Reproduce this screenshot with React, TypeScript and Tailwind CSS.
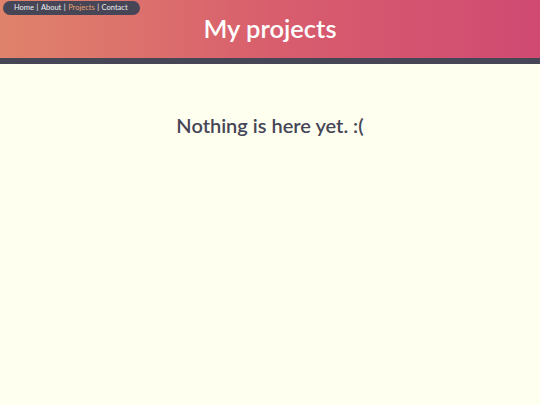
export default function App() {
  const links = ["Home", "About", "Projects", "Contact"];
  return (
    <div className="min-h-[405px] bg-[#fffff0] font-['Lato',sans-serif]">
      <header className="relative h-[58px] bg-gradient-to-r from-[#e0836b] via-[#d85e6d] to-[#d04a72] flex items-center justify-center">
        <nav className="absolute left-[3px] top-[1px] h-[14px] pl-[11px] pr-[12px] rounded-full bg-[#464657] flex items-center text-[7.5px] leading-none text-[#f0f0f0]">
          {links.map((l, i) => (
            <span key={l} className="flex items-center">
              {i > 0 && <span className="mx-[2.5px]">|</span>}
              <span className={l === "Projects" ? "text-[#e8a070]" : ""}>{l}</span>
            </span>
          ))}
        </nav>
        <h1 className="text-[25.5px] text-white font-semibold mt-[-1px]">My projects</h1>
      </header>
      <div className="h-[6px] bg-[#464657]" />
      <main className="flex justify-center pt-[46px]">
        <p className="text-[20px] font-semibold text-[#464657]">Nothing is here yet. :(</p>
      </main>
    </div>
  );
}
